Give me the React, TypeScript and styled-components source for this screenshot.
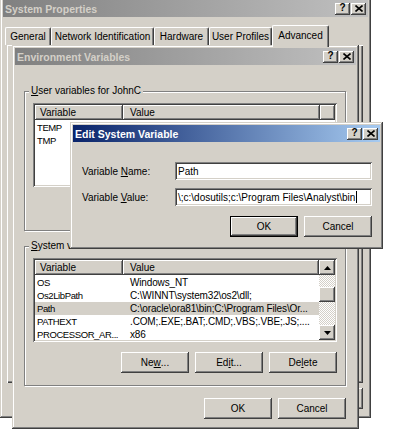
import styled, { createGlobalStyle } from 'styled-components';

const GlobalStyle = createGlobalStyle`
  html, body {
    margin: 0;
    padding: 0;
    background: #ffffff;
  }
  body {
    font-family: "Liberation Sans", Arial, sans-serif;
    font-size: 10px;
    color: #000000;
  }
`;

type Pair = [string, string];

const userVars: Pair[] = [
  ['TEMP', 'C:\\Documents and Settings\\JohnC\\Local Settings\\Temp'],
  ['TMP', 'C:\\Documents and Settings\\JohnC\\Local Settings\\Temp'],
];

const systemVars: Pair[] = [
  ['OS', 'Windows_NT'],
  ['Os2LibPath', 'C:\\WINNT\\system32\\os2\\dll;'],
  ['Path', 'C:\\oracle\\ora81\\bin;C:\\Program Files\\Or...'],
  ['PATHEXT', '.COM;.EXE;.BAT;.CMD;.VBS;.VBE;.JS;....'],
  ['PROCESSOR_AR...', 'x86'],
];

const tabs = [
  { label: 'General', w: 46 },
  { label: 'Network Identification', w: 103 },
  { label: 'Hardware', w: 55 },
  { label: 'User Profiles', w: 63 },
  { label: 'Advanced', w: 57, selected: true },
];

// classic 3d edges
const raised = `
  box-shadow: inset -1px -1px #404040, inset 1px 1px #ffffff, inset -2px -2px #808080, inset 2px 2px #d4d0c8;
`;
const sunken = `
  box-shadow: inset 1px 1px #808080, inset -1px -1px #ffffff, inset 2px 2px #404040, inset -2px -2px #d4d0c8;
`;

const Desktop = styled.div`
  position: relative;
  width: 400px;
  height: 443px;
  overflow: hidden;
  background: #ffffff;
`;

const Frame = styled.div<{ $x: number; $y: number; $w: number; $h: number }>`
  position: absolute;
  left: ${(p) => p.$x}px;
  top: ${(p) => p.$y}px;
  width: ${(p) => p.$w}px;
  height: ${(p) => p.$h}px;
  box-sizing: border-box;
  padding: 3px;
  background: #d4d0c8;
  box-shadow: inset -1px -1px #404040, inset 1px 1px #d4d0c8, inset -2px -2px #808080, inset 2px 2px #ffffff;
  display: flex;
  flex-direction: column;
`;

const TitleBar = styled.div<{ $active?: boolean }>`
  flex: none;
  height: 17px;
  display: flex;
  align-items: center;
  justify-content: space-between;
  padding: 0 2px 0 2px;
  background: ${(p) =>
    p.$active
      ? 'linear-gradient(to right, #0a246a, #a6caf0)'
      : 'linear-gradient(to right, #808080, #c0c0c0)'};
  color: ${(p) => (p.$active ? '#ffffff' : '#d4d0c8')};
`;

const Title = styled.span`
  font-weight: bold;
  font-size: 10.5px;
  white-space: nowrap;
`;

const CaptionButtons = styled.div`
  display: flex;
  gap: 1px;
`;

const CaptionButton = styled.div`
  width: 15px;
  height: 12px;
  box-sizing: border-box;
  background: #d4d0c8;
  ${raised}
  display: flex;
  align-items: center;
  justify-content: center;
  color: #000000;
  font-weight: bold;
  font-size: 10px;
  line-height: 10px;
  padding-bottom: 1px;
`;

const TabStrip = styled.div`
  flex: none;
  margin-top: 8px;
  height: 20px;
  padding-left: 2px;
  display: flex;
  align-items: flex-end;
  position: relative;
  z-index: 1;
`;

const Tab = styled.div<{ $w: number; $selected?: boolean }>`
  width: ${(p) => p.$w}px;
  height: ${(p) => (p.$selected ? 22 : 18)}px;
  margin-bottom: ${(p) => (p.$selected ? -2 : 0)}px;
  box-sizing: border-box;
  background: #d4d0c8;
  border-left: 1px solid #ffffff;
  border-top: 1px solid #ffffff;
  border-right: 1px solid #404040;
  border-radius: 2px 2px 0 0;
  box-shadow: inset -1px 0 #808080;
  display: flex;
  align-items: center;
  justify-content: center;
  padding-bottom: ${(p) => (p.$selected ? 2 : 0)}px;
  white-space: nowrap;
`;

const TabPage = styled.div`
  flex: none;
  height: 338px;
  margin: 0 5px 0 4px;
  box-shadow: inset 1px 1px #ffffff, inset -1px -1px #404040, inset -2px -2px #808080;
`;

const SysFooter = styled.div`
  flex: 1;
  display: flex;
  justify-content: flex-end;
  align-items: flex-start;
  gap: 6px;
  padding: 5px 5px 0 0;
`;

const DialogBody = styled.div<{ $pad: string }>`
  flex: 1;
  display: flex;
  flex-direction: column;
  padding: ${(p) => p.$pad};
`;

const GroupBox = styled.fieldset<{ $gap?: number }>`
  margin: ${(p) => p.$gap ?? 0}px 0 0 0;
  padding: 6px 8px 12px 8px;
  min-width: 0;
  border: 1px solid #808080;
  box-shadow: 1px 1px #ffffff, inset 1px 1px #ffffff;
  display: flex;
  flex-direction: column;
  gap: 10px;
`;

const GroupLabel = styled.legend`
  margin-left: -4px;
  padding: 0 2px;
  line-height: 12px;
  background: #d4d0c8;
`;

const ListView = styled.div`
  height: 84px;
  box-sizing: border-box;
  padding: 2px;
  background: #ffffff;
  ${sunken}
  display: flex;
  overflow: hidden;
`;

const ListBody = styled.div`
  flex: 1;
  min-width: 0;
  display: flex;
  flex-direction: column;
`;

const Header = styled.div`
  flex: none;
  height: 15px;
  margin-bottom: 1px;
  display: flex;
`;

const HeaderCell = styled.div<{ $w?: number; $pad?: number }>`
  ${(p) => (p.$w ? `width: ${p.$w}px; flex: none;` : 'flex: 1;')}
  box-sizing: border-box;
  padding-left: ${(p) => p.$pad ?? 5}px;
  background: #d4d0c8;
  box-shadow: inset -1px -1px #404040, inset 1px 1px #ffffff, inset -2px -2px #808080;
  line-height: 15px;
  white-space: nowrap;
  overflow: hidden;
`;

const Row = styled.div<{ $selected?: boolean }>`
  height: 13px;
  display: flex;
  line-height: 13px;
  letter-spacing: -0.15px;
  background: ${(p) => (p.$selected ? '#d4d0c8' : 'transparent')};
`;

// the name column is narrow, so its text is set a touch tighter
const NameCell = styled.div`
  width: 88px;
  flex: none;
  box-sizing: border-box;
  padding-left: 2px;
  font-size: 9.5px;
  letter-spacing: -0.4px;
  white-space: nowrap;
  overflow: hidden;
`;

const ValueCell = styled.div`
  flex: 1;
  min-width: 0;
  padding-left: 7px;
  white-space: nowrap;
  overflow: hidden;
`;

const ScrollBar = styled.div`
  flex: none;
  width: 16px;
  display: flex;
  flex-direction: column;
`;

const ScrollArrow = styled.div`
  flex: none;
  height: 15px;
  background: #d4d0c8;
  ${raised}
  display: flex;
  align-items: center;
  justify-content: center;
`;

const ScrollTrack = styled.div`
  flex: 1;
  background: repeating-conic-gradient(#ffffff 0 25%, #d4d0c8 0 50%) 0 0 / 2px 2px;
`;

const ScrollThumb = styled.div`
  margin-top: 12px;
  height: 15px;
  background: #d4d0c8;
  ${raised}
`;

const ButtonRow = styled.div<{ $top?: number }>`
  display: flex;
  justify-content: flex-end;
  gap: 6px;
  margin-top: ${(p) => p.$top ?? 0}px;
`;

const PushButton = styled.div<{ $default?: boolean }>`
  width: 68px;
  height: 21px;
  box-sizing: border-box;
  background: #d4d0c8;
  ${raised}
  border: ${(p) => (p.$default ? '1px solid #000000' : 'none')};
  display: flex;
  align-items: center;
  justify-content: center;
  white-space: nowrap;
`;

const FieldRow = styled.div`
  display: flex;
  align-items: center;
  height: 18px;
  & + & {
    margin-top: 8px;
  }
`;

const FieldLabel = styled.div`
  width: 93px;
  flex: none;
  white-space: nowrap;
`;

const TextBox = styled.div`
  flex: 1;
  height: 18px;
  box-sizing: border-box;
  padding: 0 3px;
  background: #ffffff;
  ${sunken}
  display: flex;
  align-items: center;
  white-space: nowrap;
  overflow: hidden;
`;

const Caret = styled.span`
  display: inline-block;
  width: 1px;
  height: 12px;
  margin-left: 1px;
  background: #000000;
`;

function Caption({ title, active }: { title: string; active?: boolean }) {
  return (
    <TitleBar $active={active}>
      <Title>{title}</Title>
      <CaptionButtons>
        <CaptionButton>?</CaptionButton>
        <CaptionButton>
          <svg width="8" height="7" viewBox="0 0 8 7">
            <path d="M0.5 0.5 L7.5 6.5 M7.5 0.5 L0.5 6.5" stroke="#000" strokeWidth="1.6" />
          </svg>
        </CaptionButton>
      </CaptionButtons>
    </TitleBar>
  );
}

function Arrow({ up }: { up?: boolean }) {
  return (
    <svg width="7" height="4" viewBox="0 0 7 4">
      <polygon points={up ? '3.5,0 7,4 0,4' : '0,0 7,0 3.5,4'} fill="#000" />
    </svg>
  );
}

function VarList({ rows, selected, scroll }: { rows: Pair[]; selected?: string; scroll?: boolean }) {
  return (
    <ListView>
      <ListBody>
        <Header>
          <HeaderCell $w={88}>Variable</HeaderCell>
          {scroll ? (
            <HeaderCell $pad={7}>Value</HeaderCell>
          ) : (
            <>
              <HeaderCell $w={197} $pad={7}>Value</HeaderCell>
              <HeaderCell />
            </>
          )}
        </Header>
        {rows.map(([name, value]) => (
          <Row key={name} $selected={name === selected}>
            <NameCell>{name}</NameCell>
            <ValueCell>{value}</ValueCell>
          </Row>
        ))}
      </ListBody>
      {scroll && (
        <ScrollBar>
          <ScrollArrow><Arrow up /></ScrollArrow>
          <ScrollTrack>
            <ScrollThumb />
          </ScrollTrack>
          <ScrollArrow><Arrow /></ScrollArrow>
        </ScrollBar>
      )}
    </ListView>
  );
}

function ListButtons() {
  return (
    <ButtonRow>
      <PushButton>Ne<u>w</u>...</PushButton>
      <PushButton>Ed<u>i</u>t...</PushButton>
      <PushButton>De<u>l</u>ete</PushButton>
    </ButtonRow>
  );
}

export default function App() {
  return (
    <>
      <GlobalStyle />
      <Desktop>
        <Frame $x={0} $y={-3} $w={371} $h={421}>
          <Caption title="System Properties" />
          <TabStrip>
            {tabs.map((t) => (
              <Tab key={t.label} $w={t.w} $selected={t.selected}>{t.label}</Tab>
            ))}
          </TabStrip>
          <TabPage />
          <SysFooter>
            <PushButton>OK</PushButton>
            <PushButton>Cancel</PushButton>
            <PushButton>Apply</PushButton>
          </SysFooter>
        </Frame>

        <Frame $x={12} $y={45} $w={347} $h={384}>
          <Caption title="Environment Variables" />
          <DialogBody $pad="20px 10px 8px 9px">
            <GroupBox>
              <GroupLabel><u>U</u>ser variables for JohnC</GroupLabel>
              <VarList rows={userVars} />
              <ListButtons />
            </GroupBox>
            <GroupBox $gap={9}>
              <GroupLabel><u>S</u>ystem variables</GroupLabel>
              <VarList rows={systemVars} selected="Path" scroll />
              <ListButtons />
            </GroupBox>
            <ButtonRow $top={12}>
              <PushButton>OK</PushButton>
              <PushButton>Cancel</PushButton>
            </ButtonRow>
          </DialogBody>
        </Frame>

        <Frame $x={70} $y={122} $w={313} $h={127}>
          <Caption title="Edit System Variable" active />
          <DialogBody $pad="20px 8px 9px 9px">
            <FieldRow>
              <FieldLabel>Variable <u>N</u>ame:</FieldLabel>
              <TextBox>Path</TextBox>
            </FieldRow>
            <FieldRow>
              <FieldLabel>Variable <u>V</u>alue:</FieldLabel>
              <TextBox>
                \;c:\dosutils;c:\Program Files\Analyst\bin
                <Caret />
              </TextBox>
            </FieldRow>
            <ButtonRow $top={10}>
              <PushButton $default>OK</PushButton>
              <PushButton>Cancel</PushButton>
            </ButtonRow>
          </DialogBody>
        </Frame>
      </Desktop>
    </>
  );
}
